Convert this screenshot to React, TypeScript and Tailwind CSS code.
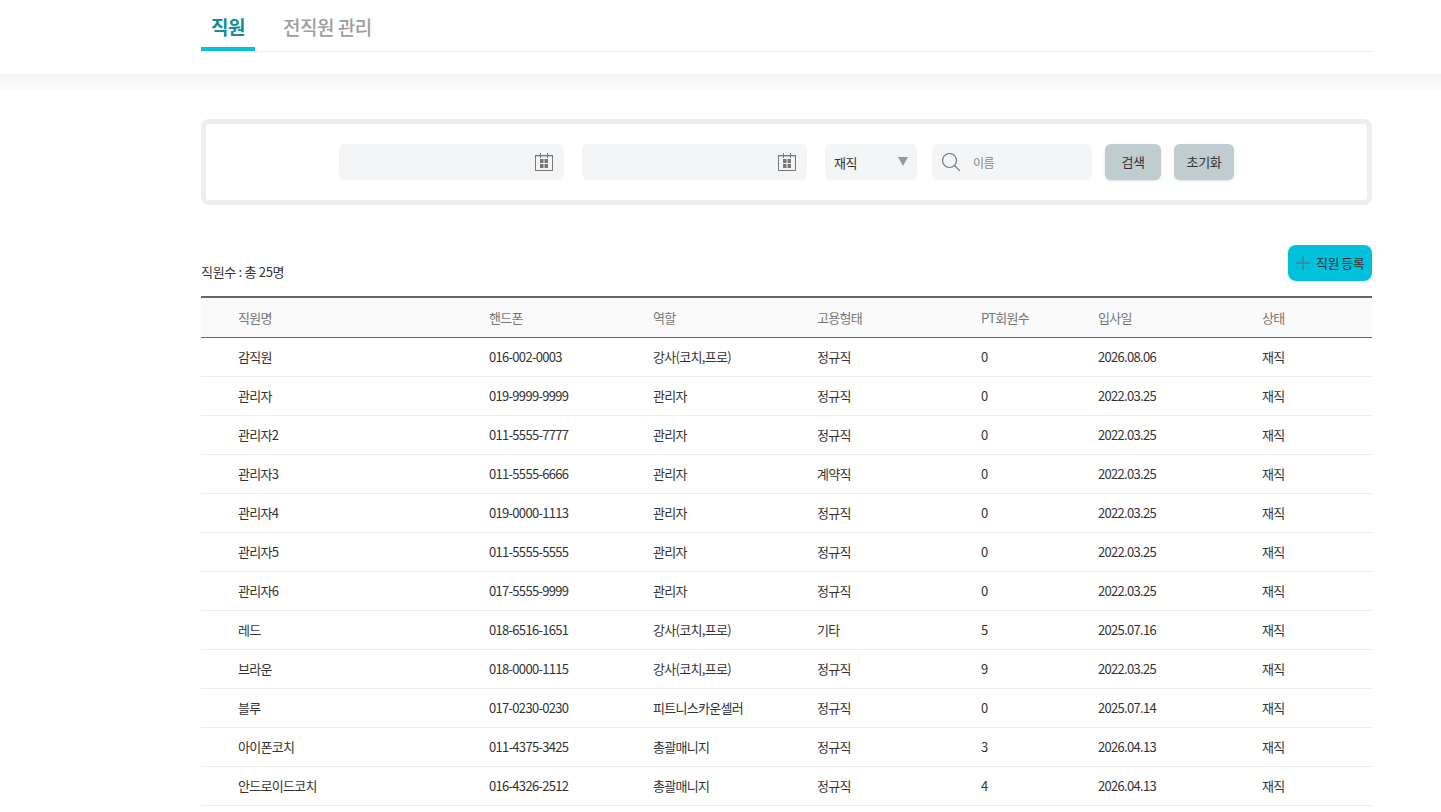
const staff = [
  ["감직원", "016-002-0003", "강사(코치,프로)", "정규직", "0", "2026.08.06", "재직"],
  ["관리자", "019-9999-9999", "관리자", "정규직", "0", "2022.03.25", "재직"],
  ["관리자2", "011-5555-7777", "관리자", "정규직", "0", "2022.03.25", "재직"],
  ["관리자3", "011-5555-6666", "관리자", "계약직", "0", "2022.03.25", "재직"],
  ["관리자4", "019-0000-1113", "관리자", "정규직", "0", "2022.03.25", "재직"],
  ["관리자5", "011-5555-5555", "관리자", "정규직", "0", "2022.03.25", "재직"],
  ["관리자6", "017-5555-9999", "관리자", "정규직", "0", "2022.03.25", "재직"],
  ["레드", "018-6516-1651", "강사(코치,프로)", "기타", "5", "2025.07.16", "재직"],
  ["브라운", "018-0000-1115", "강사(코치,프로)", "정규직", "9", "2022.03.25", "재직"],
  ["블루", "017-0230-0230", "피트니스카운셀러", "정규직", "0", "2025.07.14", "재직"],
  ["아이폰코치", "011-4375-3425", "총괄매니지", "정규직", "3", "2026.04.13", "재직"],
  ["안드로이드코치", "016-4326-2512", "총괄매니지", "정규직", "4", "2026.04.13", "재직"],
];

const headers = ["직원명", "핸드폰", "역할", "고용형태", "PT회원수", "입사일", "상태"];

const CalendarIcon = () => (
  <svg width="18" height="18" viewBox="0 0 18 18" fill="none" className="shrink-0">
    <rect x="0.5" y="2.5" width="17" height="15" stroke="#777" />
    <path d="M1 3.5H17" stroke="#ccc" />
    <path d="M5.5 0V5M12.5 0V5" stroke="#777" />
    <rect x="5" y="6" width="3.5" height="4" fill="#777" />
    <rect x="9.5" y="6" width="3.5" height="4" fill="#777" />
    <rect x="5" y="11" width="3.5" height="4" fill="#777" />
    <rect x="9.5" y="11" width="3.5" height="4" fill="#777" />
  </svg>
);

const DateInput = () => (
  <div className="w-[225px] h-9 bg-[#f3f5f7] rounded-md flex items-center justify-end pr-[11px]">
    <CalendarIcon />
  </div>
);

export default function App() {
  return (
    <div
      className="h-[812px] overflow-hidden bg-white text-[#333]"
      style={{ fontFamily: '"Noto Sans CJK KR", "Noto Sans", sans-serif' }}
    >
      {/* TABS */}
      <div className="h-[74px] pl-[201px] pr-[69px]">
        <div className="h-[52px] flex border-b border-[#eeeeee]">
          <div className="w-[54px] h-[51px] border-b-4 border-[#0bbfd8] flex justify-center pt-[12px] text-[19px] leading-[30px] font-bold tracking-[-0.5px] text-[#138d9b]">
            직원
          </div>
          <div className="ml-[28px] pt-[12px] text-[19px] leading-[30px] font-medium tracking-[-0.5px] text-[#9e9e9e]">
            전직원 관리
          </div>
        </div>
      </div>
      <div className="h-[15px] bg-gradient-to-b from-[#f5f5f5] to-[#f9f9f9]" />

      <div className="pl-[201px] pr-[69px] pt-[30px]">
        {/* SEARCH BOX */}
        <div className="h-[86px] border-[5px] border-[#eeeeee] rounded-lg flex items-center pl-[133px] pb-[1px]">
          <DateInput />
          <div className="w-[18px]" />
          <DateInput />
          <div className="ml-[18px] w-[92px] h-9 bg-[#f3f5f7] rounded-md flex items-center justify-between pl-[9px] pr-[9px] text-[13px] tracking-[-0.5px] text-[#333]">
            <span className="pt-[2px]">재직</span>
            <svg width="10" height="9" viewBox="0 0 10 9" className="mb-[1px]">
              <path d="M0 0H10L5 9Z" fill="#999" />
            </svg>
          </div>
          <div className="ml-[15px] w-[160px] h-9 bg-[#f3f5f7] rounded-md flex items-center pl-[10px] text-[12px] tracking-[-0.5px] text-[#888]">
            <svg width="18" height="18" viewBox="0 0 18 18" fill="none" stroke="#777" strokeWidth="1.2">
              <circle cx="7.5" cy="7.5" r="7" />
              <path d="M12.5 12.5L18 18" />
            </svg>
            <span className="ml-[13px] pt-[2px]">이름</span>
          </div>
          <div className="ml-[13px] w-14 h-9 bg-[#bfccd0] rounded-md shadow-sm flex items-center justify-center text-[13px] tracking-[-0.5px]">
            검색
          </div>
          <div className="ml-[13px] w-[60px] h-9 bg-[#bfccd0] rounded-md shadow-sm flex items-center justify-center text-[13px] tracking-[-0.3px]">
            초기화
          </div>
        </div>

        {/* COUNT + ADD */}
        <div className="mt-[40px] h-9 flex justify-between items-end">
          <div className="text-[13px] leading-[20px] tracking-[-0.3px] text-[#333] mb-[-1px]">직원수 : 총 25명</div>
          <div className="w-[84px] h-9 bg-[#00c1dc] rounded-lg flex items-center pl-[8px] text-[13px] tracking-[-0.5px] text-[#333]">
            <svg width="14" height="14" viewBox="0 0 14 14" stroke="#3f8494" strokeWidth="1.3">
              <path d="M7 0V14M0 7H14" />
            </svg>
            <span className="ml-[6px]">직원 등록</span>
          </div>
        </div>

        {/* TABLE */}
        <table className="mt-[15px] w-full table-fixed border-t-2 border-[#666] text-[13px] tracking-[-0.7px]">
          <colgroup>
            <col className="w-[288px]" />
            <col className="w-[164px]" />
            <col className="w-[164px]" />
            <col className="w-[164px]" />
            <col className="w-[117px]" />
            <col className="w-[164px]" />
            <col />
          </colgroup>
          <thead>
            <tr className="h-10 bg-[#fafafa] border-b border-[#666]">
              {headers.map((h, i) => (
                <th key={h} className={`font-normal text-left text-[#777] ${i === 0 ? "pl-[37px]" : ""}`}>
                  {h}
                </th>
              ))}
            </tr>
          </thead>
          <tbody>
            {staff.map((row) => (
              <tr key={row[0]} className="h-[39px] border-b border-[#eeeeee]">
                {row.map((cell, i) => (
                  <td key={i} className={`text-[#333] ${i === 0 ? "pl-[37px]" : ""}`}>
                    {cell}
                  </td>
                ))}
              </tr>
            ))}
          </tbody>
        </table>
      </div>
    </div>
  );
}
